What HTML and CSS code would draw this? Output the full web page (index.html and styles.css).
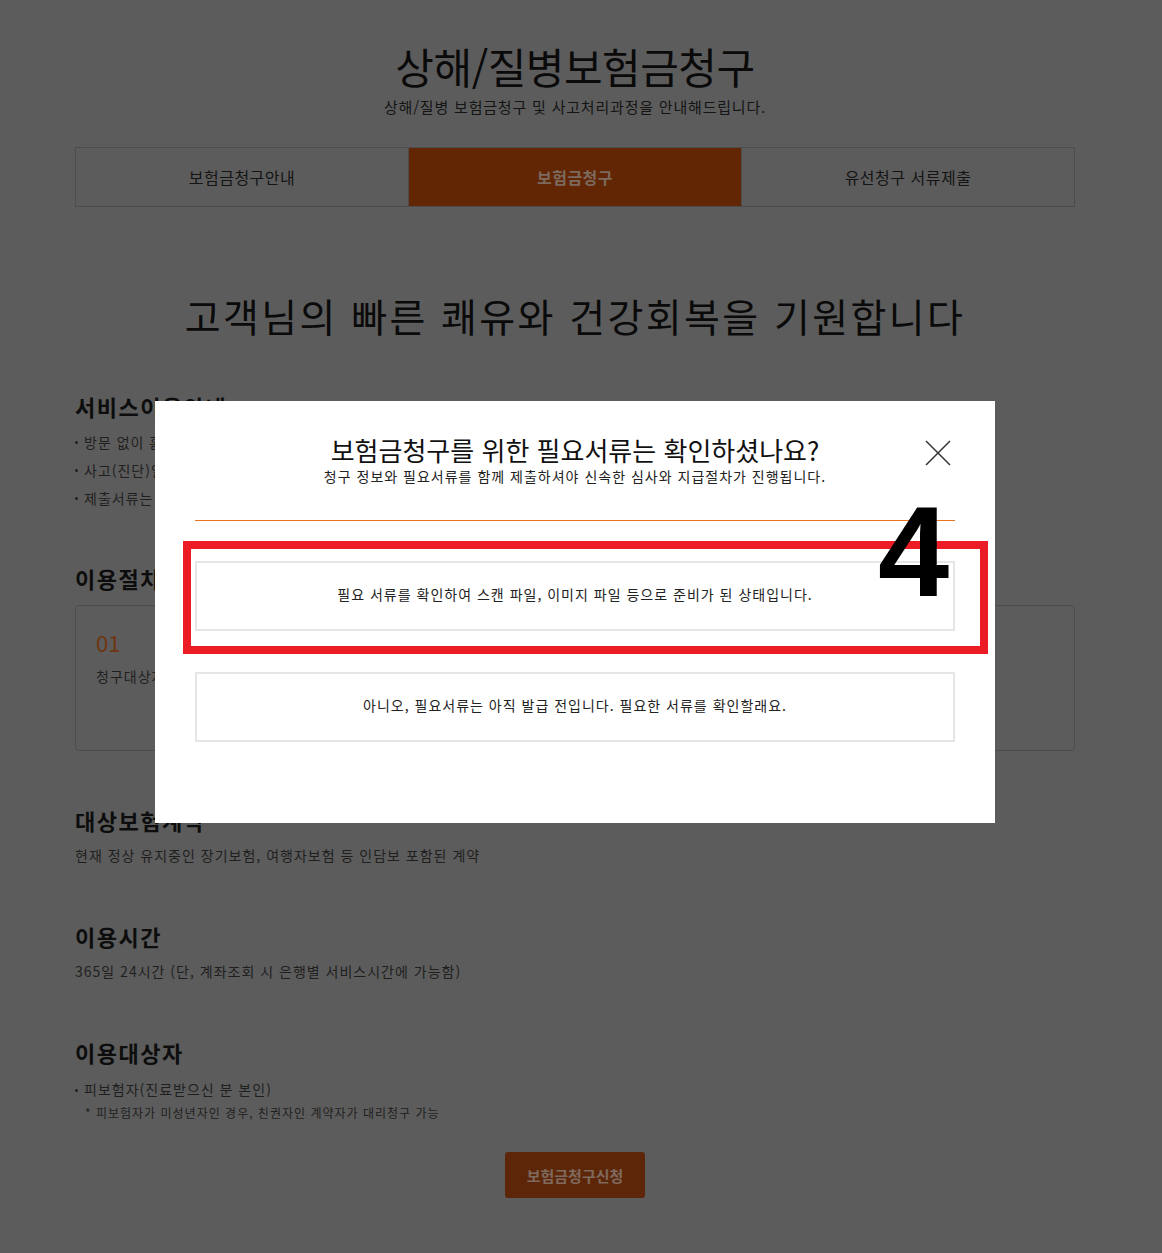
FILE: index.html
```html
<!DOCTYPE html>
<html lang="ko">
<head>
<meta charset="utf-8">
<title>상해/질병보험금청구</title>
<link rel="stylesheet" href="styles.css">
</head>
<body>
<div class="wrap">
  <div class="container">
    <header class="page-head">
      <h1 class="page-title">상해/질병보험금청구</h1>
      <p class="page-sub">상해/질병 보험금청구 및 사고처리과정을 안내해드립니다.</p>
    </header>
    <nav class="tabs">
      <a class="tab">보험금청구안내</a>
      <a class="tab active">보험금청구</a>
      <a class="tab">유선청구 서류제출</a>
    </nav>
    <h2 class="hero">고객님의 빠른 쾌유와 건강회복을 기원합니다</h2>

    <section class="sec sec-info">
      <h3 class="sec-title">서비스이용안내</h3>
      <ul class="bullets">
        <li>방문 없이 홈페이지에서 간편하게 보험금을 청구하실 수 있습니다.</li>
        <li>사고(진단)일로부터 3년 이내에 청구하셔야 합니다.</li>
        <li>제출서류는 스캔 파일 또는 이미지 파일로 첨부해 주시기 바랍니다.</li>
      </ul>
    </section>

    <section class="sec sec-steps">
      <h3 class="sec-title">이용절차</h3>
      <div class="steps">
        <div class="step"><span class="step-no">01</span><p class="step-txt">청구대상자 확인</p></div>
        <div class="step"><span class="step-no">02</span><p class="step-txt">청구정보 입력</p></div>
        <div class="step"><span class="step-no">03</span><p class="step-txt">서류 첨부</p></div>
        <div class="step"><span class="step-no">04</span><p class="step-txt">청구완료</p></div>
      </div>
    </section>

    <section class="sec sec-target">
      <h3 class="sec-title">대상보험계약</h3>
      <p class="sec-text">현재 정상 유지중인 장기보험, 여행자보험 등 인담보 포함된 계약</p>
    </section>

    <section class="sec">
      <h3 class="sec-title">이용시간</h3>
      <p class="sec-text">365일 24시간 (단, 계좌조회 시 은행별 서비스시간에 가능함)</p>
    </section>

    <section class="sec">
      <h3 class="sec-title">이용대상자</h3>
      <p class="sec-text dot">피보험자(진료받으신 분 본인)</p>
      <p class="note">* 피보험자가 미성년자인 경우, 친권자인 계약자가 대리청구 가능</p>
    </section>

    <div class="btn-row"><a class="btn-apply">보험금청구신청</a></div>
  </div>

  <div class="modal">
    <div class="modal-head">
      <h2 class="modal-title">보험금청구를 위한 필요서류는 확인하셨나요?</h2>
      <p class="modal-sub">청구 정보와 필요서류를 함께 제출하셔야 신속한 심사와 지급절차가 진행됩니다.</p>
      <button class="modal-close" aria-label="닫기">
        <svg width="26" height="26" viewBox="0 0 26 26"><path d="M1 1L25 25M25 1L1 25" stroke="#333" stroke-width="1.5" fill="none"/></svg>
      </button>
    </div>
    <div class="modal-body">
      <a class="option">필요 서류를 확인하여 스캔 파일, 이미지 파일 등으로 준비가 된 상태입니다.</a>
      <a class="option">아니오, 필요서류는 아직 발급 전입니다. 필요한 서류를 확인할래요.</a>
    </div>
    <div class="mark-box"></div>
    <div class="mark-num">4</div>
  </div>
</div>
</body>
</html>
```

FILE: styles.css
```css
* { box-sizing: border-box; }
html, body { margin: 0; padding: 0; }
body {
  background: #5c5c5c;
  font-family: "Noto Sans CJK KR", "Noto Sans", sans-serif;
  color: #0d0d0d;
  height: 1253px;
  overflow: hidden;
}
.wrap { width: 1150px; position: relative; }
.container { width: 1000px; margin: 0 auto; }

.page-head { text-align: center; padding-top: 41px; }
.page-title { margin: 0; font-size: 42px; font-weight: 400; line-height: 50px; color: #0a0a0a; letter-spacing: -0.5px; }
.page-sub { margin: 6px 0 0; font-size: 15px; line-height: 20px; color: #141414; letter-spacing: 0.8px; }

.tabs { display: flex; margin-top: 30px; border: 1px solid #4d4d4d; height: 60px; }
.tab { flex: 1; display: flex; align-items: center; justify-content: center; font-size: 16px; color: #141414; letter-spacing: 0.5px; }
.tab + .tab { border-left: 1px solid #4d4d4d; }
.tab.active { background: #622605; color: #7d6a5e; font-weight: 700; }

.hero { margin: 83px 0 0; text-align: center; font-size: 39px; font-weight: 400; line-height: 50px; color: #0a0a0a; letter-spacing: 2.4px; }

.sec { margin-top: 55px; }
.sec-info { margin-top: 51px; }
.sec-title { margin: 0; font-size: 22px; font-weight: 700; line-height: 30px; color: #0d0d0d; letter-spacing: 1.5px; }
.bullets { list-style: none; margin: 7px 0 0; padding: 0; }
.bullets li { font-size: 14px; line-height: 28px; color: #1f1f1f; padding-left: 9px; position: relative; letter-spacing: 1px; }
.bullets li::before, .dot::before { content: ""; position: absolute; left: 0; top: 13px; width: 3px; height: 3px; border-radius: 50%; background: #1f1f1f; }

.sec-steps { margin-top: 51px; }
.steps { display: flex; margin-top: 12px; border: 1px solid #4d4d4d; border-radius: 4px; height: 146px; }
.step { flex: 1; padding: 21px 20px; }
.step-no { display: block; font-size: 22px; line-height: 30px; color: #6e3512; }
.step-txt { margin: 9px 0 0; font-size: 14px; line-height: 20px; color: #1f1f1f; letter-spacing: 1px; }

.sec-target { margin-top: 54px; }
.sec-text { margin: 9px 0 0; font-size: 14px; line-height: 22px; color: #1f1f1f; position: relative; letter-spacing: 1px; }
.sec-text.dot { padding-left: 9px; margin-top: 11px; }
.sec-text.dot::before { top: 11px; }
.note { margin: 4px 0 0 10px; font-size: 12px; line-height: 18px; color: #1f1f1f; letter-spacing: 1px; }

.btn-row { display: flex; justify-content: center; margin-top: 30px; }
.btn-apply { width: 140px; height: 46px; border-radius: 3px; background: #5e2608; color: #7e6a5e; font-size: 15px; font-weight: 700; display: flex; align-items: center; justify-content: center; }

.modal {
  position: absolute; left: 155px; top: 401px; width: 840px; height: 422px;
  background: #fff; padding: 35px 40px 0;
}
.modal-head { position: relative; text-align: center; padding-bottom: 35px; border-bottom: 1px solid #e9741d; }
.modal-title { margin: 0; font-size: 26px; font-weight: 400; line-height: 28px; color: #111; }
.modal-sub { margin: 3px 0 0; font-size: 14px; line-height: 18px; color: #222; letter-spacing: 1px; }
.modal-close { position: absolute; right: 4px; top: 4px; width: 26px; height: 26px; padding: 0; border: 0; background: none; }
.modal-close svg { display: block; }
.modal-body { display: flex; flex-direction: column; gap: 41px; padding-top: 40px; }
.option { display: flex; align-items: center; justify-content: center; height: 70px; padding-bottom: 4px; border: 2px solid #e6e6e6; font-size: 14px; color: #222; letter-spacing: 1px; }

.mark-box { position: absolute; left: 28px; top: 140px; width: 805px; height: 113px; border: 8px solid #ec1c24; pointer-events: none; }
.mark-num { position: absolute; left: 723px; top: 87px; font-family: "Liberation Sans", Arial, sans-serif; font-weight: 700; font-size: 128px; line-height: 1; color: #000; }
```
